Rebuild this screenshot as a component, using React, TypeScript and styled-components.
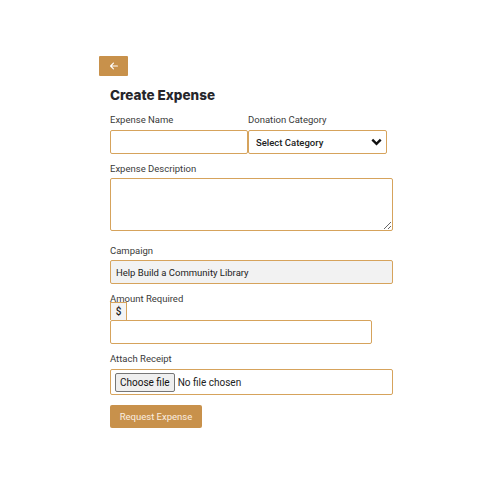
import React from "react";
import styled, { createGlobalStyle } from "styled-components";

const Global = createGlobalStyle`
  html, body { margin: 0; padding: 0; background: #ffffff; }
  body { font-family: Roboto, "Noto Sans", Arial, sans-serif; color: #333; }
  * { box-sizing: border-box; }
`;

const GOLD = "#d6a35c";
const BTN = "#c8914b";

const Page = styled.div`
  padding: 56px 0 40px 99px;
  width: 400px;
`;

const BackButton = styled.button`
  width: 29px;
  height: 20px;
  border: none;
  border-radius: 1px;
  background: ${BTN};
  display: flex;
  align-items: center;
  justify-content: center;
  padding: 0;
  cursor: pointer;
`;

const Form = styled.form`
  padding-left: 11px;
  width: 294px;
  display: flex;
  flex-direction: column;
`;

const Title = styled.h2`
  margin: 10px 0 0;
  font-family: Inter, "Noto Sans", sans-serif;
  font-weight: 800;
  font-size: 13.5px;
  line-height: 18px;
  color: #26262b;
`;

const Row = styled.div`
  display: grid;
  grid-template-columns: 138px 139px;
  margin-top: 10px;
`;

const Field = styled.div<{ $mt?: number }>`
  display: flex;
  flex-direction: column;
  align-items: flex-start;
  margin-top: ${(p) => p.$mt ?? 0}px;
`;

const Label = styled.label<{ $mb?: number }>`
  font-size: 9.5px;
  line-height: 12px;
  color: #3a3a3a;
  margin-bottom: ${(p) => p.$mb ?? 4}px;
`;

const TextInput = styled.input<{ $w?: number; $bg?: string }>`
  width: ${(p) => p.$w ?? 283}px;
  height: 24px;
  border: 1px solid ${GOLD};
  border-radius: 2px;
  background: ${(p) => p.$bg ?? "#fff"};
  font-family: Roboto, Arial, sans-serif;
  font-size: 9.5px;
  color: #222;
  padding: 0 5px;
  outline: none;
`;

const SelectWrap = styled.div`
  position: relative;
  width: 139px;
  height: 24px;
`;

const Select = styled.select`
  appearance: none;
  -webkit-appearance: none;
  width: 100%;
  height: 100%;
  border: 1px solid ${GOLD};
  border-radius: 2px;
  background: #fff;
  font-family: Roboto, Arial, sans-serif;
  font-size: 9.5px;
  font-weight: 500;
  color: #222;
  padding: 0 7px;
  outline: none;
`;

const Chevron = styled.svg`
  position: absolute;
  right: 5px;
  top: 8px;
  pointer-events: none;
`;

const TextArea = styled.textarea`
  width: 283px;
  height: 53px;
  border: 1px solid ${GOLD};
  border-radius: 2px;
  display: block;
  outline: none;
  font-family: Roboto, Arial, sans-serif;
  font-size: 10px;
  padding: 4px;
`;

const Addon = styled.span`
  width: 17px;
  height: 18px;
  border: 1px solid ${GOLD};
  border-bottom: none;
  background: #f4f4f4;
  font-size: 10px;
  font-weight: 500;
  color: #222;
  display: flex;
  align-items: center;
  justify-content: center;
`;

const FileBox = styled.label`
  width: 283px;
  height: 26px;
  border: 1px solid ${GOLD};
  border-radius: 2px;
  display: flex;
  align-items: center;
  padding-left: 4px;
  gap: 3px;
  font-family: Roboto, Arial, sans-serif;
  font-size: 10px;
  color: #222;
  cursor: pointer;
`;

const HiddenFile = styled.input`
  display: none;
`;

const FileButton = styled.span`
  height: 19px;
  padding: 0 4px;
  border: 1px solid #767676;
  border-radius: 2px;
  background: #efefef;
  color: #111;
  display: flex;
  align-items: center;
`;

const SubmitButton = styled.button`
  margin-top: 10px;
  width: 92px;
  height: 23px;
  border: none;
  border-radius: 2px;
  background: ${BTN};
  color: #fbeee0;
  font-family: Roboto, Arial, sans-serif;
  font-size: 9.5px;
  padding: 0;
  cursor: pointer;
`;

export default function App() {
  return (
    <>
      <Global />
      <Page>
        <BackButton type="button" aria-label="Back">
          <svg width="8" height="8" viewBox="0 0 448 448">
            <path
              fill="#fff"
              d="M9.4 201.4c-12.5 12.5-12.5 32.8 0 45.3l160 160c12.5 12.5 32.8 12.5 45.3 0s12.5-32.8 0-45.3L109.3 256H416c17.7 0 32-14.3 32-32s-14.3-32-32-32H109.3L214.6 86.6c12.5-12.5 12.5-32.8 0-45.3s-32.8-12.5-45.3 0l-160 160z"
            />
          </svg>
        </BackButton>
        <Form onSubmit={(e) => e.preventDefault()}>
          <Title>Create Expense</Title>
          <Row>
            <Field>
              <Label>Expense Name</Label>
              <TextInput $w={138} />
            </Field>
            <Field>
              <Label>Donation Category</Label>
              <SelectWrap>
                <Select defaultValue="">
                  <option value="">Select Category</option>
                </Select>
                <Chevron width="11" height="8" viewBox="0 0 11 8">
                  <path d="M1.3 1.6 L5.5 5.8 L9.7 1.6" fill="none" stroke="#111" strokeWidth="2.4" />
                </Chevron>
              </SelectWrap>
            </Field>
          </Row>
          <Field $mt={9}>
            <Label $mb={3}>Expense Description</Label>
            <TextArea />
          </Field>
          <Field $mt={14}>
            <Label $mb={3}>Campaign</Label>
            <TextInput readOnly $bg="#f2f2f2" defaultValue="Help Build a Community Library" />
          </Field>
          <Field $mt={9}>
            <Label $mb={-3}>Amount Required</Label>
            <Addon>$</Addon>
            <TextInput $w={262} />
          </Field>
          <Field $mt={9}>
            <Label $mb={4}>Attach Receipt</Label>
            <FileBox>
              <HiddenFile type="file" />
              <FileButton>Choose file</FileButton>
              No file chosen
            </FileBox>
          </Field>
          <SubmitButton type="submit">Request Expense</SubmitButton>
        </Form>
      </Page>
    </>
  );
}
